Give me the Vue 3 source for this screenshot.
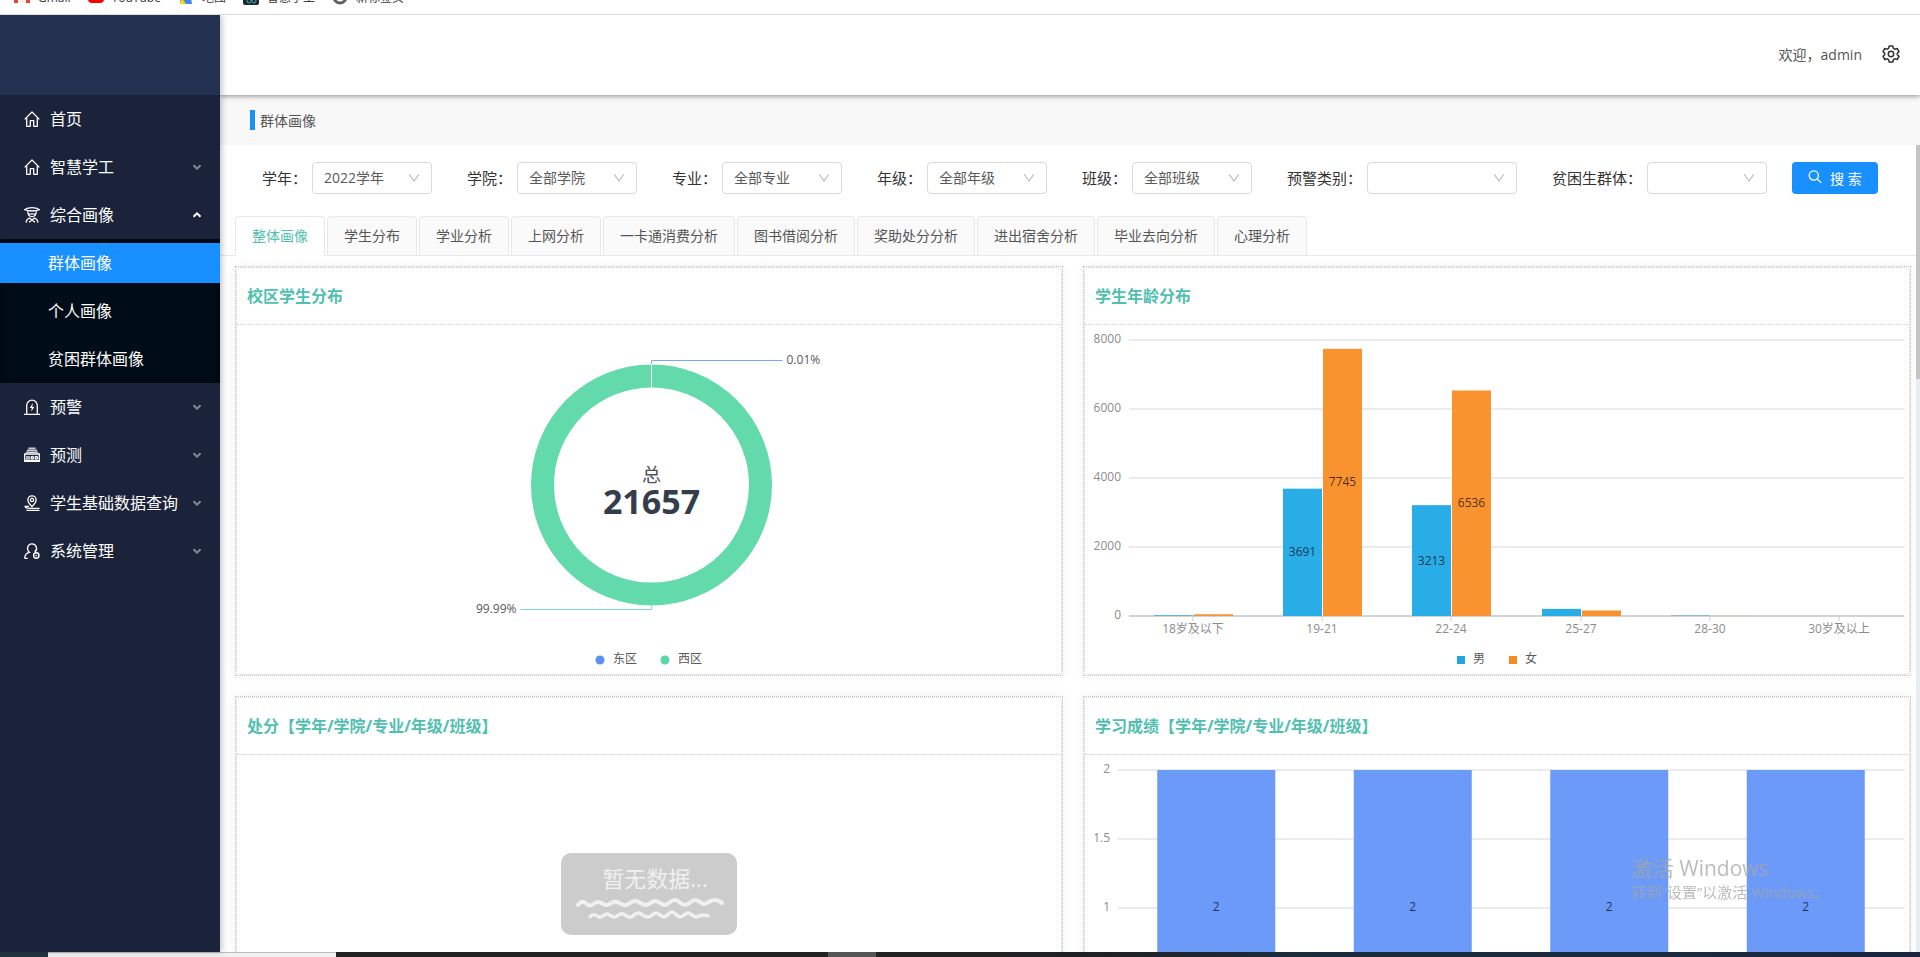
<script setup>
import { computed, onBeforeUnmount, onMounted, ref } from 'vue'

const menuTop = [
  { label: '首页', icon: 'home' },
  { label: '智慧学工', icon: 'home', group: true },
  { label: '综合画像', icon: 'graduate', group: true, open: true },
]
const subMenu = ['群体画像', '个人画像', '贫困群体画像']
const menuBottom = [
  { label: '预警', icon: 'alarm', group: true },
  { label: '预测', icon: 'forecast', group: true },
  { label: '学生基础数据查询', icon: 'pin', group: true },
  { label: '系统管理', icon: 'user', group: true },
]

const filters = [
  { id: 'year', label: '学年', value: '2022学年' },
  { id: 'college', label: '学院', value: '全部学院' },
  { id: 'major', label: '专业', value: '全部专业' },
  { id: 'grade', label: '年级', value: '全部年级' },
  { id: 'class', label: '班级', value: '全部班级' },
  { id: 'warning', label: '预警类别', value: '', wide: true },
  { id: 'poverty', label: '贫困生群体', value: '' },
]

const tabs = ['整体画像', '学生分布', '学业分析', '上网分析', '一卡通消费分析', '图书借阅分析', '奖助处分分析', '进出宿舍分析', '毕业去向分析', '心理分析']
const activeTab = ref(0)

const chartBox = ref(null)
const width = ref(824)
let observer
onMounted(() => {
  observer = new ResizeObserver(([entry]) => {
    width.value = Math.round(entry.contentRect.width)
  })
  observer.observe(chartBox.value)
})
onBeforeUnmount(() => observer.disconnect())

const TOP = 15
const BOTTOM = 291
const donutX = computed(() => (width.value + 5) / 2)
const right = computed(() => width.value - 5)

const ages = [
  { name: '18岁及以下', male: 20, female: 50 },
  { name: '19-21', male: 3691, female: 7745 },
  { name: '22-24', male: 3213, female: 6536 },
  { name: '25-27', male: 206, female: 160 },
  { name: '28-30', male: 14, female: 3 },
  { name: '30岁及以上', male: 0, female: 0 },
]
const AGE_LEFT = 44
const ageBars = computed(() => {
  const step = (right.value - AGE_LEFT) / ages.length
  const bar = Math.round(step * 0.3)
  return ages.map((a, i) => {
    const center = Math.floor(AGE_LEFT + step * (i + 0.5))
    const mh = (a.male / 8000) * (BOTTOM - TOP)
    const fh = (a.female / 8000) * (BOTTOM - TOP)
    return { ...a, center, bar, mh, fh }
  })
})
const ageTicks = [8000, 6000, 4000, 2000, 0]

const SCORE_LEFT = 33
const scoreBars = computed(() => {
  const step = (right.value - SCORE_LEFT) / 4
  const bar = Math.round(step * 0.6)
  return [0, 1, 2, 3].map((i) => {
    const center = SCORE_LEFT + step * (i + 0.5)
    return { center, bar, x: center - bar / 2 }
  })
})
const scoreTicks = ['2', '1.5', '1', '0.5', '0']
</script>

<template>
  <div class="screen">
    <nav class="bookmarks" aria-label="书签栏">
      <div class="bookmark-row">
        <a href="#" class="bookmark">
          <svg width="16" height="16" viewBox="0 0 16 16"><path d="M0 2v12h4V7l4 3 4-3v7h4V2l-8 6z" fill="#ea4335" /><path d="M4 7v7h8V7l-4 3z" fill="#f1f1f1" /></svg><span>Gmail</span></a>
        <a href="#" class="bookmark">
          <svg width="16" height="16" viewBox="0 0 16 16"><rect y="2" width="16" height="12" rx="4" fill="#f00" /></svg><span>YouTube</span></a>
        <a href="#" class="bookmark">
          <svg width="16" height="16" viewBox="0 0 16 16"><path d="M2 2h10l2 13H2z" fill="#4285f4" /><path d="M2 15l1-7 5 7z" fill="#fbdc04" /></svg><span>地图</span></a>
        <a href="#" class="bookmark">
          <svg width="16" height="16" viewBox="0 0 16 16"><rect width="16" height="16" rx="2" fill="#1c2630" /><circle cx="6" cy="12" r="2" fill="none" stroke="#46a9b5" /><circle cx="11" cy="12" r="2" fill="none" stroke="#46a9b5" /></svg><span>智慧学工</span></a>
        <a href="#" class="bookmark">
          <svg width="16" height="16" viewBox="0 0 16 16"><circle cx="8" cy="8" r="6" fill="none" stroke="#5f6368" stroke-width="3" /></svg><span>新标签页</span></a>
      </div>
    </nav>

    <div class="app">
      <aside class="sidebar">
        <div class="brand"></div>
        <nav class="menu" aria-label="主菜单">
          <template v-for="(list, n) in [menuTop, menuBottom]" :key="n">
            <a v-for="item in list" :key="item.label" href="#" class="menu-item">
              <svg class="menu-icon" width="16" height="16" viewBox="0 0 16 16" fill="none" stroke="#fff" stroke-width="1.3">
                <template v-if="item.icon === 'home'">
                  <path d="M.6 8.400 8 1l7.400 7.400M2.700 7v8.300h3.600V9.600h3.400v5.700h3.600V7" stroke-linejoin="round" />
                </template>
                <template v-else-if="item.icon === 'graduate'">
                  <path d="M.8 2.600C3 1.200 5 .7 8 .7s5 .5 7.200 1.900C13 3.600 11 4 8 4S3 3.600 .8 2.600z" />
                  <path d="M3.700 4C3.700 7.500 5.500 9.700 8 9.700s4.300-2.200 4.300-5.700M4 6.500c2.500.8 5.500.8 8 0" stroke-width="1.100" />
                  <path d="M2 15.600c.3-2.600 1.500-4 3.500-4.600l5.500 4.300M14 15.600c-.3-2.600-1.500-4-3.500-4.600L5 15.300" stroke-width="1.200" />
                </template>
                <template v-else-if="item.icon === 'alarm'">
                  <path d="M0 15.300h16M2.700 15V6.500a5.300 5.300 0 0 1 10.600 0V15" />
                  <path d="M8.800 4 5.800 9h2L7.300 12.500 10.300 8H8.400z" fill="#fff" stroke="none" />
                </template>
                <template v-else-if="item.icon === 'forecast'">
                  <path d="M4.500 1.300h7M3 3.300h10M2 5.300h12" stroke-width="1.500" opacity=".8" />
                  <path d="M.7 7h14.600v7.300H.7z" />
                  <path d="M3 9v3.500M5 9v3.500M.7 13.500h14.600" />
                  <circle cx="8.300" cy="10.700" r="1.200" /><circle cx="12.300" cy="10.700" r="1.200" />
                </template>
                <template v-else-if="item.icon === 'pin'">
                  <path d="M8 11.500C5 8.500 3.900 7 3.900 4.900a4.100 4.100 0 0 1 8.200 0C12.100 7 11 8.500 8 11.500zM.5 11.300H5M1 12.300c2 1 5 1 7 1h7.500M2.500 15.500h13" />
                  <circle cx="8" cy="5" r="1.600" />
                </template>
                <template v-else>
                  <path d="M.7 15.500c0-3.500 2-5.700 4.700-6.200C2 6.500 3.500.8 8 .8s6.200 5.500 2.700 8.300M.7 15.300h3" />
                  <circle cx="12.300" cy="12.500" r="2.700" stroke-width="1.400" /><circle cx="12.300" cy="12.500" r=".5" stroke-width="1" />
                </template>
              </svg>
              <span>{{ item.label }}</span>
              <svg v-if="item.group" class="menu-arrow" :class="{ open: item.open }" width="10" height="8" viewBox="0 0 10 8" fill="none" stroke="currentColor" stroke-width="2">
                <path d="M1.500 2.200 5 5.700l3.500-3.500" />
              </svg>
            </a>
            <div v-if="n === 0" class="submenu">
              <a v-for="(label, i) in subMenu" :key="label" href="#" class="submenu-item" :class="{ selected: i === 0 }">{{ label }}</a>
            </div>
          </template>
        </nav>
      </aside>

      <div class="main">
        <header class="header">
          <span>欢迎，admin</span>
          <button type="button" class="gear" aria-label="设置">
            <svg width="18" height="18" viewBox="0 0 18 18" fill="none" stroke="#333" stroke-width="1.500" stroke-linejoin="round">
              <path d="M7.200 1h3.600l.6 2.300 1.500.9 2.300-.7L17 6.600 15.300 8.200v1.600L17 11.400l-1.800 3.100-2.300-.7-1.500.9-.6 2.300H7.200l-.6-2.300-1.500-.9-2.300.7L1 11.400l1.700-1.600V8.200L1 6.600l1.800-3.100 2.300.7 1.500-.9z" />
              <circle cx="9" cy="9" r="2.700" />
            </svg>
          </button>
        </header>

        <div class="crumb"><span class="crumb-mark"></span><span>群体画像</span></div>

        <div class="scroller">
          <main class="content">
            <form class="filters" @submit.prevent>
              <div v-for="f in filters" :key="f.id" class="field">
                <label :for="f.id">{{ f.label }}：</label>
                <div class="select" :class="{ wide: f.wide }">
                  <select :id="f.id"><option>{{ f.value }}</option></select>
                  <svg width="12" height="12" viewBox="0 0 12 12" fill="none" stroke="#bfbfbf" stroke-width="1.200"><path d="M1.300 2.300 6 9l4.700-6.700" /></svg>
                </div>
              </div>
              <button type="submit" class="search">
                <svg width="14" height="14" viewBox="0 0 14 14" fill="none" stroke="#fff" stroke-width="1.300"><circle cx="5.800" cy="5.500" r="4.600" /><path d="m9.200 8.900 4 4" /></svg>
                <span>搜 索</span>
              </button>
            </form>

            <div class="tabs" role="tablist">
              <button v-for="(t, i) in tabs" :key="t" type="button" role="tab" class="tab" :class="{ active: activeTab === i }" :aria-selected="activeTab === i" @click="activeTab = i">{{ t }}</button>
            </div>

            <div class="cards">
              <section class="card">
                <div class="card-inner">
                  <h2>校区学生分布</h2>
                  <div ref="chartBox" class="chart">
                    <svg :width="width" height="349" role="img" aria-label="校区学生分布">
                      <circle :cx="donutX" cy="160" r="109" fill="none" stroke="#63daab" stroke-width="23" />
                      <path :d="`M${donutX} 63V39`" stroke="#fff" stroke-width="1" />
                      <path :d="`M${donutX} 39V35.500H${donutX + 131}`" fill="none" stroke="#7ba5fb" />
                      <path :d="`M${donutX} 281V284.500H${donutX - 131}`" fill="none" stroke="#7be0b8" />
                      <text :x="donutX + 135" y="39" class="pie-label">0.01%</text>
                      <text :x="donutX - 135" y="288" class="pie-label end">99.99%</text>
                      <text :x="donutX" y="157" class="total-name">总</text>
                      <text :x="donutX" y="189" class="total">21657</text>
                      <circle :cx="width / 2 - 49" cy="335" r="4.500" fill="#5b8ff9" />
                      <text :x="width / 2 - 36" y="338" class="legend">东区</text>
                      <circle :cx="width / 2 + 16" cy="335" r="4.500" fill="#5ad8a6" />
                      <text :x="width / 2 + 29" y="338" class="legend">西区</text>
                    </svg>
                  </div>
                </div>
              </section>

              <section class="card">
                <div class="card-inner">
                  <h2>学生年龄分布</h2>
                  <div class="chart">
                    <svg :width="width" height="349" role="img" aria-label="学生年龄分布">
                      <g v-for="(t, i) in ageTicks" :key="t">
                        <path :d="`M${AGE_LEFT} ${TOP + i * 69}H${right}`" :stroke="t ? '#ebebeb' : '#d3d3d3'" stroke-width="2" />
                        <text :x="AGE_LEFT - 8" :y="TOP + 3 + i * 69" class="axis end">{{ t }}</text>
                      </g>
                      <g v-for="b in ageBars" :key="b.name">
                        <path :d="`M${b.center} ${BOTTOM}v5`" stroke="#ccc" />
                        <rect :x="b.center - b.bar" :y="BOTTOM - b.mh" :width="b.bar" :height="b.mh" fill="#29ade7" />
                        <rect :x="b.center + 1" :y="BOTTOM - b.fh" :width="b.bar" :height="b.fh" fill="#f9932f" />
                        <template v-if="b.male > 1000">
                          <text :x="b.center - b.bar / 2" :y="BOTTOM + 4 - b.mh / 2" class="value">{{ b.male }}</text>
                          <text :x="b.center + 1 + b.bar / 2" :y="BOTTOM + 4 - b.fh / 2" class="value">{{ b.female }}</text>
                        </template>
                        <text :x="b.center" y="308" class="axis middle">{{ b.name }}</text>
                      </g>
                      <rect :x="width / 2 - 40" y="331" width="8" height="8" fill="#1ea6e6" />
                      <text :x="width / 2 - 24" y="338" class="legend">男</text>
                      <rect :x="width / 2 + 12" y="331" width="8" height="8" fill="#f78c24" />
                      <text :x="width / 2 + 28" y="338" class="legend">女</text>
                    </svg>
                  </div>
                </div>
              </section>

              <section class="card">
                <div class="card-inner">
                  <h2>处分【学年/学院/专业/年级/班级】</h2>
                  <div class="chart empty">
                    <div class="empty-box">
                      <span>暂无数据...</span>
                      <svg width="150" height="30" viewBox="0 0 150 30" fill="none" stroke="#f0f0f0" stroke-linecap="round">
                        <path d="M4 9c5-7 8-1 10 0 4 2 6-3 10-3s6 4 9 3 6-4 10-3 5 4 9 3 6-5 10-4 6 4 10 4 6-5 10-4 6 4 9 4 6-5 10-5 6 5 10 5 6-5 10-5 6 4 9 4 6-4 10-4 6 1 8 3" stroke-width="4" />
                        <path d="M16 21c4-5 6-1 9 0s5-3 8-3 5 4 8 3 5-4 8-3 5 4 8 3 5-5 8-4 5 4 9 4 5-4 8-4 5 4 8 4 5-5 8-5 5 5 8 5 5-4 8-4 5 4 8 4 6-4 12-1" stroke-width="3.500" />
                      </svg>
                    </div>
                  </div>
                </div>
              </section>

              <section class="card">
                <div class="card-inner">
                  <h2>学习成绩【学年/学院/专业/年级/班级】</h2>
                  <div class="chart">
                    <svg :width="width" height="349" role="img" aria-label="学习成绩">
                      <g v-for="(t, i) in scoreTicks" :key="t">
                        <path :d="`M${SCORE_LEFT} ${TOP + i * 69}H${right}`" stroke="#ebebeb" stroke-width="2" />
                        <text :x="SCORE_LEFT - 8" :y="TOP + 3 + i * 69" class="axis end">{{ t }}</text>
                      </g>
                      <g v-for="b in scoreBars" :key="b.center">
                        <rect :x="b.x" :y="TOP" :width="b.bar" :height="BOTTOM - TOP" fill="#6c9af8" />
                        <text :x="b.center" y="156" class="value">2</text>
                      </g>
                    </svg>
                  </div>
                </div>
              </section>
            </div>
          </main>
          <div class="track"><div class="thumb"></div></div>
        </div>
      </div>
    </div>

    <footer class="taskbar">
      <span class="start"></span><span class="search-box"></span><span class="apps"></span><span class="app-active"></span><span class="rest"></span>
    </footer>

    <div class="watermark">
      <p class="wm-title">激活 Windows</p>
      <p class="wm-text">转到“设置”以激活 Windows。</p>
    </div>
  </div>
</template>

<style>
body {
  margin: 0;
  overflow: hidden;
}
</style>

<style scoped>
* {
  box-sizing: border-box;
}
.screen {
  height: 100vh;
  display: flex;
  flex-direction: column;
  overflow: hidden;
  background: #fff;
  font-family: "Open Sans", "Noto Sans CJK SC", sans-serif;
  font-size: 14px;
  color: #555;
}
button,
select {
  font: inherit;
}
a {
  color: inherit;
  text-decoration: none;
}
.bookmarks {
  height: 15px;
  flex: none;
  overflow: hidden;
  background: #fff;
  border-bottom: 1px solid #dadce0;
  position: relative;
  z-index: 3;
}
.bookmark-row {
  display: flex;
  gap: 17px;
  margin-top: -14px;
  padding-left: 14px;
}
.bookmark {
  display: flex;
  align-items: center;
  gap: 8px;
  font-size: 12px;
  line-height: 20px;
  color: #3c4043;
}
.bookmark span {
  padding-top: 2px;
}
.app {
  flex: 1;
  min-height: 0;
  display: flex;
}
.sidebar {
  width: 220px;
  flex: none;
  background: #1a233a;
  box-shadow: 2px 0 6px rgba(0, 21, 41, 0.25);
  position: relative;
  z-index: 2;
}
.brand {
  height: 80px;
  background: #253150;
}
.menu-item {
  display: flex;
  align-items: center;
  height: 48px;
  padding: 0 18px 0 24px;
  gap: 10px;
  font-size: 16px;
  color: #fff;
}
.menu-item span {
  padding-bottom: 2px;
}
.menu-arrow {
  margin-left: auto;
  color: #858a98;
}
.menu-arrow.open {
  color: #fff;
  transform: rotate(180deg);
}
.submenu {
  background: #000c17;
  box-shadow: inset 0 2px 8px rgba(0, 0, 0, 0.45);
  padding: 4px 0;
  display: flex;
  flex-direction: column;
  gap: 8px;
}
.submenu-item {
  height: 40px;
  line-height: 40px;
  padding-left: 48px;
  font-size: 16px;
  color: #fff;
}
.submenu-item.selected {
  background: #1890ff;
}
.main {
  flex: 1;
  min-width: 0;
  display: flex;
  flex-direction: column;
}
.header {
  height: 80px;
  flex: none;
  display: flex;
  align-items: center;
  justify-content: flex-end;
  gap: 20px;
  padding-right: 20px;
  background: #fff;
  box-shadow: 0 1px 5px rgba(0, 0, 0, 0.45);
  position: relative;
  z-index: 1;
}
.header span {
  padding-bottom: 2px;
}
.gear {
  display: flex;
  padding: 0 0 3px;
  border: 0;
  background: none;
}
.crumb {
  height: 50px;
  flex: none;
  display: flex;
  align-items: center;
  gap: 5px;
  padding-left: 30px;
  background: #f8f8f8;
}
.crumb-mark {
  width: 5px;
  height: 20px;
  background: #1890ff;
}
.scroller {
  flex: 1;
  min-height: 0;
  display: flex;
}
.content {
  flex: 1;
  min-width: 0;
  overflow: hidden;
}
.track {
  width: 4px;
  background: #e8ecf5;
}
.thumb {
  height: 29%;
  background: #c4c4c4;
}
.filters {
  display: flex;
  align-items: center;
  gap: 35px;
  padding: 17px 38px 22px 42px;
}
.field {
  display: flex;
  align-items: center;
  gap: 5px;
}
.field label {
  padding-bottom: 2px;
  font-size: 15px;
  color: #333;
  white-space: nowrap;
}
.select {
  position: relative;
  width: 120px;
}
.select.wide {
  width: 150px;
}
.select select {
  display: block;
  width: 100%;
  height: 32px;
  padding: 0 11px 2px;
  appearance: none;
  border: 1px solid #d9d9d9;
  border-radius: 4px;
  background: #fff;
  color: #595959;
}
.select svg {
  position: absolute;
  right: 12px;
  top: 10px;
  pointer-events: none;
}
.search {
  display: flex;
  align-items: center;
  gap: 8px;
  height: 32px;
  margin-left: -10px;
  padding: 0 16px;
  border: 0;
  border-radius: 4px;
  background: #1890ff;
  color: #fff;
  white-space: nowrap;
}
.search svg {
  margin-bottom: 2px;
}
.search span {
  padding-bottom: 1px;
}
.tabs {
  display: flex;
  gap: 2px;
  padding-left: 15px;
  border-bottom: 1px solid #e8e8e8;
}
.tab {
  height: 40px;
  margin-bottom: -1px;
  padding: 0 16px 2px;
  border: 1px solid #e8e8e8;
  border-radius: 4px 4px 0 0;
  background: #fafafa;
  color: #555;
  white-space: nowrap;
}
.tab.active {
  background: #fff;
  border-bottom-color: #fff;
  color: #50bfb0;
}
.cards {
  display: grid;
  grid-template-columns: 1fr 1fr;
  gap: 20px;
  padding: 10px 5px 20px 15px;
}
.card {
  min-width: 0;
  border: 1px dotted #c4c4c4;
  box-shadow: 0 0 10px rgba(0, 0, 0, 0.06);
}
.card-inner {
  border: 1px solid #e8e8e8;
  border-radius: 4px;
}
.card h2 {
  margin: 0;
  padding: 0 10px;
  height: 57px;
  line-height: 57px;
  border-bottom: 1px dotted #ccc;
  font-size: 16px;
  font-weight: 700;
  color: #50bfb0;
}
.chart {
  height: 349px;
  overflow: hidden;
}
.chart svg {
  display: block;
}
.chart text {
  font-size: 12px;
}
.chart .end {
  text-anchor: end;
}
.chart .middle,
.chart .value,
.chart .total,
.chart .total-name {
  text-anchor: middle;
}
.chart .axis {
  fill: #8c8c8c;
}
.chart .pie-label,
.chart .legend {
  fill: #595959;
}
.chart .value {
  fill: #000;
  fill-opacity: 0.7;
}
.chart .total-name {
  font-size: 19px;
  fill: #4b535e;
}
.chart .total {
  font-size: 34px;
  font-weight: 700;
  fill: #333d4b;
}
.empty {
  display: flex;
  justify-content: center;
  padding-top: 98px;
}
.empty-box {
  width: 176px;
  height: 82px;
  padding-top: 9px;
  display: flex;
  flex-direction: column;
  align-items: center;
  gap: 2px;
  border-radius: 10px;
  background: #ccc;
  color: #f0f0f0;
  font-size: 22px;
  line-height: 32px;
}
.empty-box span {
  padding-left: 12px;
}
.taskbar {
  height: 5px;
  flex: none;
  display: flex;
}
.start {
  width: 48px;
  background: #20363f;
}
.search-box {
  width: 288px;
  background: #f2f2f2;
  border-top: 1px solid #bdbdbd;
}
.apps {
  width: 492px;
  background: #222;
}
.app-active {
  width: 48px;
  background: #555;
}
.rest {
  flex: 1;
  background: linear-gradient(90deg, #222 0, #1f2022 20%, #1b2c3b 40%, #1a2640 100%);
}
.watermark {
  position: fixed;
  right: 90px;
  bottom: 54px;
  z-index: 5;
  color: rgba(165, 165, 165, 0.75);
  pointer-events: none;
}
.watermark p {
  margin: 0;
  white-space: nowrap;
}
.wm-title {
  font-size: 21px;
  line-height: 26px;
}
.wm-text {
  font-size: 15px;
  line-height: 22px;
}
</style>
